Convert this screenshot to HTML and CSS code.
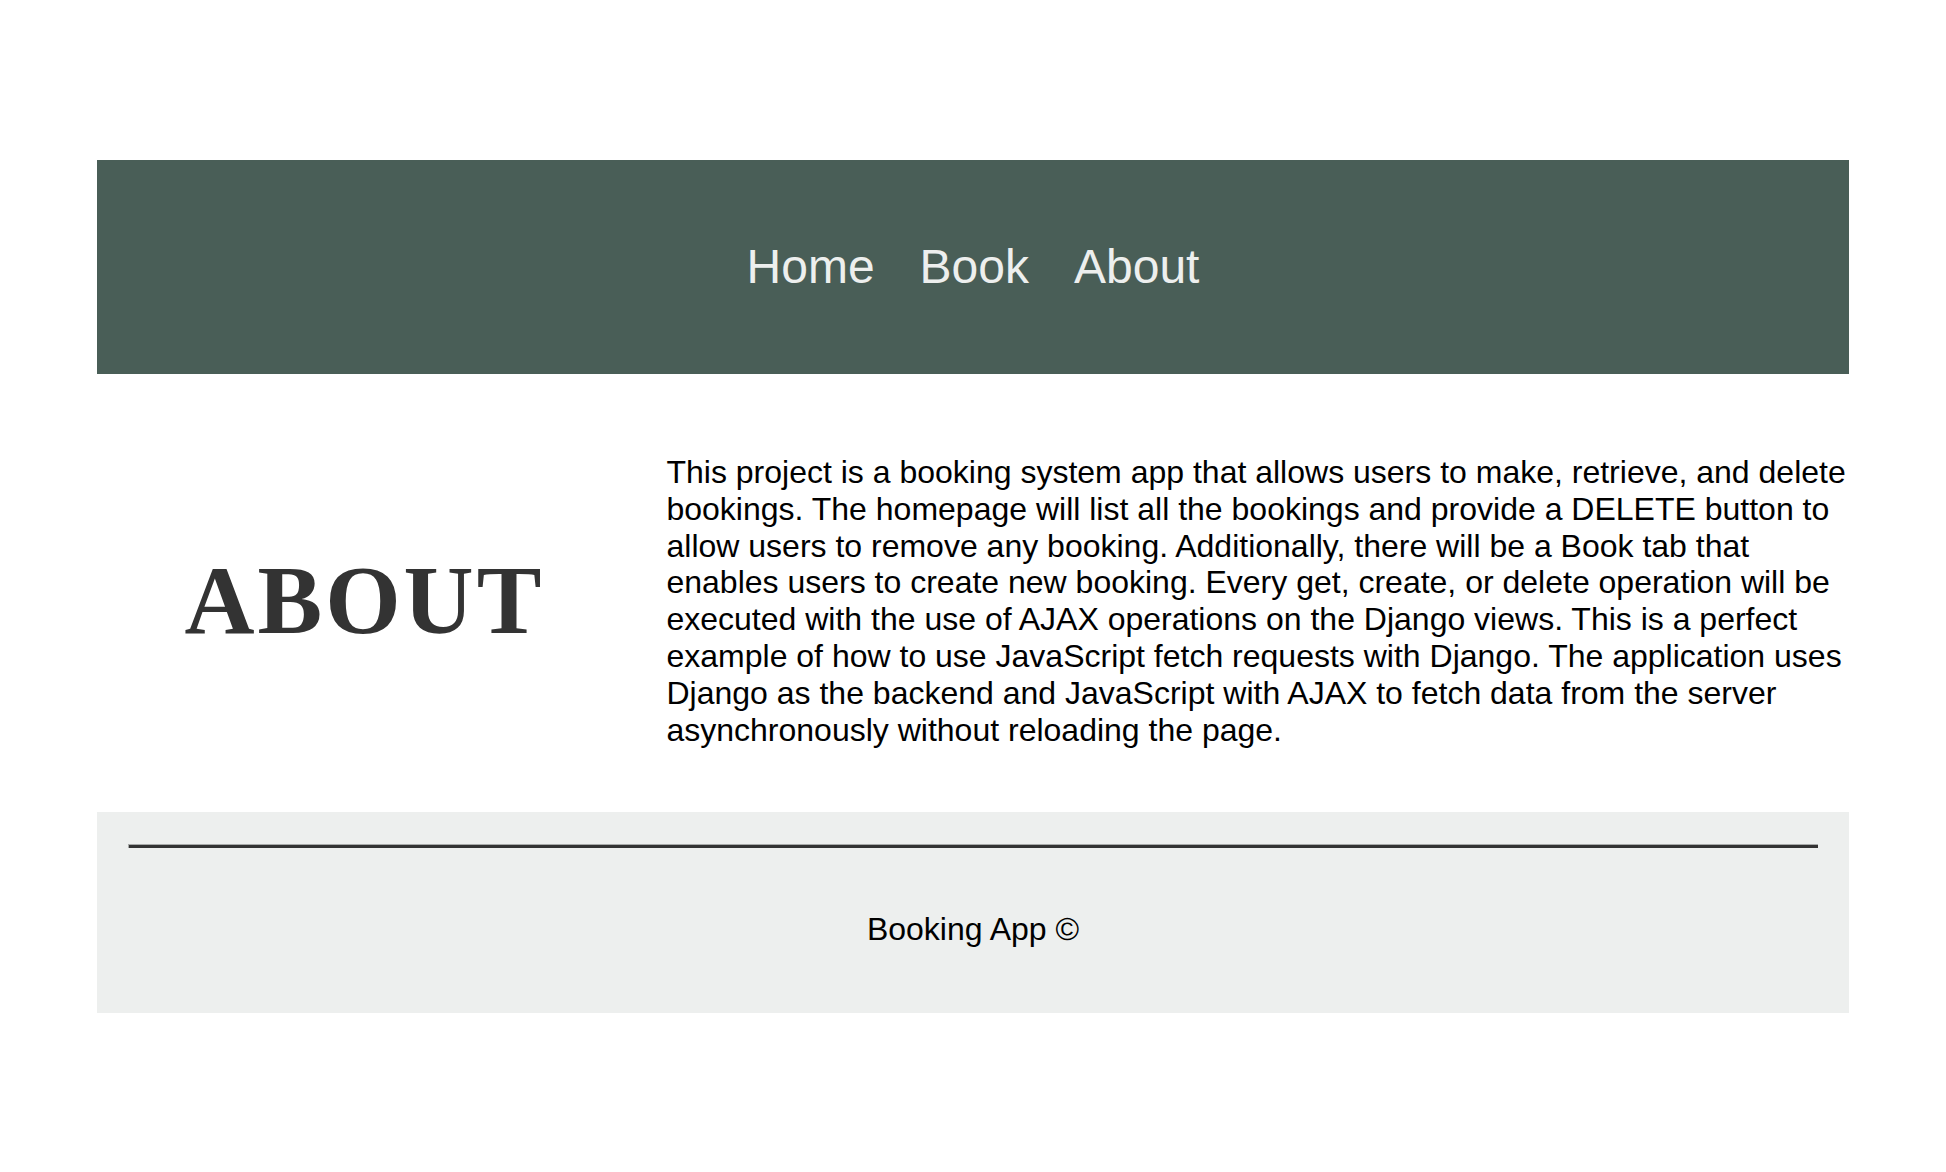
FILE: index.html
```html
<!DOCTYPE html>
<html lang="en">
<head>
<meta charset="utf-8">
<title>Booking App - About</title>
<link rel="stylesheet" href="styles.css">
</head>
<body>
<div class="page">
  <header class="site-header">
    <nav class="nav">
      <a class="nav-link" href="#">Home</a>
      <a class="nav-link" href="#">Book</a>
      <a class="nav-link" href="#">About</a>
    </nav>
  </header>
  <main class="about">
    <div class="about-title-col">
      <h1 class="about-title">ABOUT</h1>
    </div>
    <p class="about-text">This project is a booking system app that allows users to make, retrieve, and delete bookings. The homepage will list all the bookings and provide a DELETE button to allow users to remove any booking. Additionally, there will be a Book tab that enables users to create new booking. Every get, create, or delete operation will be executed with the use of AJAX operations on the Django views. This is a perfect example of how to use JavaScript fetch requests with Django. The application uses Django as the backend and JavaScript with AJAX to fetch data from the server asynchronously without reloading the page.</p>
  </main>
  <footer class="site-footer">
    <hr class="footer-rule">
    <p class="footer-text">Booking App &copy;</p>
  </footer>
</div>
</body>
</html>
```
FILE: styles.css
```css
html, body {
  margin: 0;
  padding: 0;
  background: #ffffff;
}

body {
  font-family: "Liberation Sans", Arial, sans-serif;
  color: #000000;
}

.page {
  width: 90%;
  margin: 160px auto 0;
}

.site-header {
  background: #495e57;
  height: 214px;
  display: flex;
  align-items: center;
  justify-content: center;
}

.nav {
  display: flex;
  gap: 45px;
}

.nav-link {
  color: #edefee;
  text-decoration: none;
  font-size: 48px;
  line-height: 1.15;
}

.about {
  display: grid;
  grid-template-columns: 30.5% 1fr;
  column-gap: 35px;
  align-items: center;
  padding: 80px 0 64px;
}

.about-title-col {
  display: flex;
  justify-content: center;
}

.about-title {
  margin: 0;
  font-family: "Liberation Serif", "Times New Roman", serif;
  font-weight: bold;
  font-size: 97px;
  letter-spacing: 3px;
  color: #333333;
  line-height: 1.15;
}

.about-text {
  margin: 0;
  font-size: 32px;
  line-height: 36.8px;
}

.site-footer {
  background: #edefee;
  padding: 32px 31px 65px;
}

.footer-rule {
  margin: 0;
  border: 0;
  border-top: 1px solid #a8aaa9;
  border-left: 1px solid #a8aaa9;
  height: 3px;
  background: #333333;
}

.footer-text {
  margin: 63px 0 0;
  text-align: center;
  font-size: 32px;
  line-height: 36.8px;
}
```
